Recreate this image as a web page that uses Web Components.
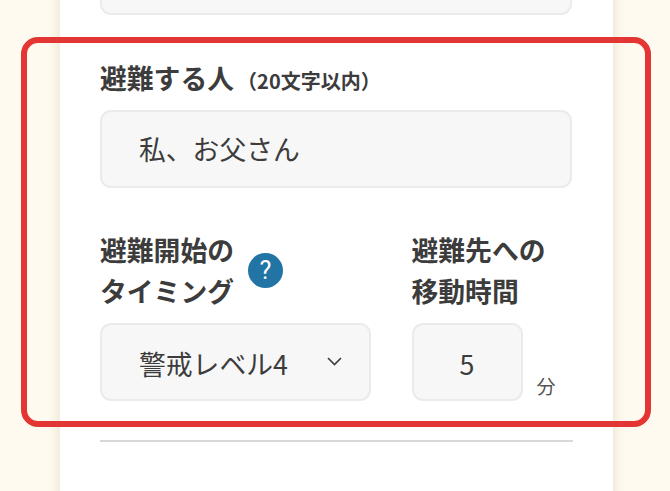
<!DOCTYPE html>
<html lang="ja"><head><meta charset="utf-8">
<style>
html,body{margin:0;height:491px;overflow:hidden;background:#fffaf0;font-family:"Noto Sans CJK JP","Noto Sans",sans-serif;color:#3c3c3c}
</style></head><body>
<template id="t-page"><style>
:host{display:block;height:491px;position:relative;overflow:hidden}
.card{box-sizing:border-box;margin:-60px 0 0 60px;width:553px;height:640px;padding:60px 40px 0;background:#fff;box-shadow:0 0 12px rgba(90,70,30,.17)}
.hl{position:absolute;left:21px;top:37px;width:630px;height:390px;box-sizing:border-box;border:6px solid #e43535;border-radius:17px;pointer-events:none}
</style><div class="card"><slot></slot></div><div class="hl"></div></template>

<template id="t-field"><style>
:host{display:block;box-sizing:border-box;height:78px;background:#f7f7f7;border:2px solid #ebebeb;border-radius:11px;font-size:26.8px;line-height:74px;padding-left:37px;color:#3c3c3c;white-space:nowrap;position:relative}
:host([center]){padding:0;text-align:center}
:host([low]){line-height:77px}
</style><slot></slot><slot name="end"></slot></template>

<template id="t-label"><style>
:host{display:block;font-size:26.8px;font-weight:700;line-height:41px;color:#3c3c3c}
::slotted(small){font-size:20px;font-weight:700;margin-left:-3px}
</style><slot></slot></template>

<template id="t-help"><style>
:host{display:flex;width:35px;height:35px;border-radius:50%;background:#2274a5;color:#fff;align-items:center;justify-content:center;font:400 25px/1 Roboto,sans-serif}
</style><slot></slot></template>

<script>
for(const [n,t] of [['sk-page','t-page'],['sk-field','t-field'],['sk-label','t-label'],['sk-help','t-help']]){
customElements.define(n,class extends HTMLElement{constructor(){super();this.attachShadow({mode:'open'}).appendChild(document.getElementById(t).content.cloneNode(true));}});}
</script>

<sk-page>
<sk-field style="margin-top:-63px;width:472px"></sk-field>
<sk-label style="margin-top:44px;height:41px;line-height:38px">避難する人 <small>（20文字以内）</small></sk-label>
<sk-field style="margin-top:10px;width:472px">私、お父さん</sk-field>
<div style="display:flex;gap:40.5px;margin-top:41px">
  <div style="width:271px">
    <div style="display:flex;align-items:center;gap:14px">
      <sk-label>避難開始の<br>タイミング</sk-label><sk-help>?</sk-help>
    </div>
    <sk-field low select style="margin-top:12px">警戒レベル4<svg slot="end" width="15" height="9" viewBox="0 0 15 9" style="position:absolute;right:27px;top:31.5px" fill="none" stroke="#3c3c3c" stroke-width="1.6"><path d="M1 1l6.5 6.5L14 1"/></svg></sk-field>
  </div>
  <div>
    <sk-label>避難先への<br>移動時間</sk-label>
    <div style="display:flex;margin-top:12px;align-items:flex-end;gap:14px">
      <sk-field low center style="width:111px">5</sk-field>
      <span style="font-size:19.14px;line-height:27px;margin-bottom:1px;color:#555">分</span>
    </div>
  </div>
</div>
<div style="height:2px;background:#d8d8d8;margin-top:39px;width:473px"></div>
</sk-page>
</body></html>
